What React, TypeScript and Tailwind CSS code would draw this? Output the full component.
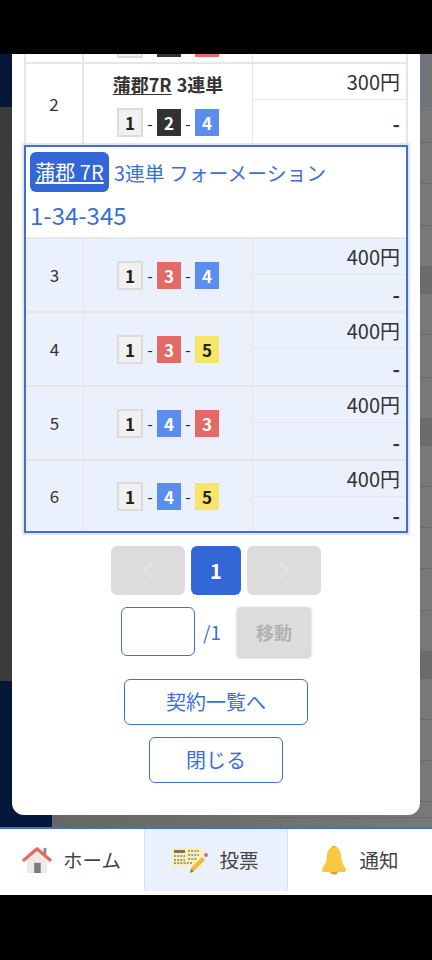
const font = { fontFamily: '"Noto Sans CJK JP", sans-serif' };

type Num = 1 | 2 | 3 | 4 | 5;

const numClass: Record<Num, string> = {
  1: "h-[29px] w-[26px] border-2 border-[#dcdcdc] bg-[#f1f1f1] text-[#222]",
  2: "h-[27px] w-[24px] bg-[#333333] text-white",
  3: "h-[27px] w-[24px] bg-[#e46a65] text-white",
  4: "h-[27px] w-[24px] bg-[#5b8def] text-white",
  5: "h-[27px] w-[24px] bg-[#f7e568] text-[#222]",
};

function Badge({ n }: { n: Num }) {
  return (
    <span className={`flex items-center justify-center text-[17px] leading-none font-bold ${numClass[n]}`}>
      {n}
    </span>
  );
}

function Combo({ nums }: { nums: Num[] }) {
  return (
    <div className="flex items-center justify-center">
      <Badge n={nums[0]} />
      <span className="w-[14px] text-center text-[16px] leading-none text-[#222]">-</span>
      <Badge n={nums[1]} />
      <span className="w-[14px] text-center text-[16px] leading-none text-[#222]">-</span>
      <Badge n={nums[2]} />
    </div>
  );
}

function Prices({ amount }: { amount: string }) {
  return (
    <div className="flex flex-1 flex-col">
      <div className="flex h-[36px] items-center justify-end border-b border-[#e6e6e6] pr-[6px] text-[20px] text-[#333]">
        {amount}
      </div>
      <div className="flex flex-1 items-center justify-end pr-[6px] pt-1 text-[20px] font-bold text-[#333]">-</div>
    </div>
  );
}

function GroupRow({ no, nums, last }: { no: number; nums: Num[]; last?: boolean }) {
  return (
    <div className={`flex bg-[#eaf0fc] ${last ? "h-[70px]" : "h-[74px] border-b-2 border-[#e6e6e6]"}`}>
      <div className="flex w-[58px] items-center justify-center border-r border-[#e6e6e6] text-[17px] text-[#333]">
        {no}
      </div>
      <div className="flex w-[169px] items-center justify-center border-r border-[#e6e6e6]">
        <Combo nums={nums} />
      </div>
      <Prices amount="400円" />
    </div>
  );
}

function HomeIcon() {
  return (
    <svg width="30" height="28" viewBox="0 0 32 30">
      <rect x="23" y="2" width="3" height="8" fill="#8a8a8a" />
      <path d="M5 13 L16 4 L27 13 V29 H5 Z" fill="#efebe4" />
      <rect x="13" y="18" width="7" height="11" fill="#7b7b7b" />
      <path d="M2 15 L16 3 L30 15" fill="none" stroke="#e46a60" strokeWidth="3.4" strokeLinecap="round" strokeLinejoin="round" />
    </svg>
  );
}

function TicketIcon() {
  return (
    <svg width="38" height="28" viewBox="0 0 38 28">
      <rect x="1" y="2" width="31" height="18" rx="1" fill="#f9efbb" />
      <rect x="3" y="4" width="11" height="3" fill="#77736a" />
      <path d="M3 10h11M3 14h11M17 5h11M17 9h11M17 13h9M3 17h18" stroke="#a49c7d" strokeWidth="2" strokeDasharray="2 1.2" />
      <path d="M20 22 L31 11 L34 14 L23 25 L19 27 Z" fill="#f2b93b" />
      <path d="M19 27 L20 23 L23 25 Z" fill="#8d7a4c" />
      <circle cx="35" cy="9" r="2" fill="#e46a60" />
    </svg>
  );
}

function BellIcon() {
  return (
    <svg width="26" height="30" viewBox="0 0 26 30">
      <circle cx="13" cy="4" r="3" fill="#ea9330" />
      <circle cx="13" cy="25" r="4.5" fill="#ea9330" />
      <path d="M13 2 C7 2 6 8 5.5 14 C5 19 2 21 1 25 C1 26.5 2 27 4 27 H22 C24 27 25 26.5 25 25 C24 21 21 19 20.5 14 C20 8 19 2 13 2 Z" fill="#fbc93f" />
    </svg>
  );
}

function Chevron({ dir }: { dir: "left" | "right" }) {
  return (
    <svg width="10" height="16" viewBox="0 0 10 16" fill="none" stroke="#e6e6e6" strokeWidth="1.4">
      <path d={dir === "left" ? "M9 0.5 L1.5 8 L9 15.5" : "M1 0.5 L8.5 8 L1 15.5"} />
    </svg>
  );
}

// strip of the page that shows behind the dim layer
function Backdrop() {
  const rows = [36, 41, 42, 41, 27, 41, 43, 41, 27, 41, 41, 41, 42, 41, 27, 41, 41, 41, 16];
  return (
    <div className="flex h-full">
      <div className="flex w-[52px] flex-col">
        <div className="h-[53px] bg-[#06183a]" />
        <div className="flex-1 bg-[#3b3b3b]" />
        <div className="h-[146px] bg-[#06183a]" />
      </div>
      <div className="flex flex-1 flex-col bg-gradient-to-r from-[#666666] to-[#787878]">
        <div className="h-[53px] bg-[#70737a]" />
        {rows.map((h, i) => (
          <div
            key={i}
            style={{ height: h }}
            className={`border-b border-[#6a6a6a] ${h === 27 ? "bg-[#6b6b6b]" : ""}`}
          />
        ))}
      </div>
    </div>
  );
}

export default function App() {
  return (
    <div style={font} className="flex h-[960px] w-[432px] flex-col overflow-hidden bg-black">
      <div className="h-[54px] shrink-0" />

      <div className="relative h-[773px] shrink-0">
        <Backdrop />

        <div className="absolute inset-x-[12px] top-0 h-[761px] overflow-hidden rounded-b-[12px] bg-white px-[12px]">
          <div className="flex h-[10px] border-x-2 border-b-2 border-[#e6e6e6]">
            <div className="w-[58px] border-r-2 border-[#e6e6e6]" />
            <div className="flex h-[10px] w-[169px] items-end justify-center overflow-hidden border-r border-[#e6e6e6]">
              <div className="mb-[6px] shrink-0">
                <Combo nums={[1, 2, 3]} />
              </div>
            </div>
            <div className="flex-1" />
          </div>

          <div className="flex h-[81px] border-x-2 border-[#e6e6e6]">
            <div className="flex w-[58px] items-center justify-center border-r-2 border-[#e6e6e6] pb-[2px] text-[17px] text-[#333]">
              2
            </div>
            <div className="flex w-[169px] flex-col items-center border-r border-[#e6e6e6] pt-[5px]">
              <div className="flex h-[30px] items-center gap-[5px] text-[18px] leading-none font-bold text-[#333]">
                <span className="underline underline-offset-2">蒲郡7R</span>
                <span>3連単</span>
              </div>
              <div className="mt-[9px]">
                <Combo nums={[1, 2, 4]} />
              </div>
            </div>
            <div className="flex flex-1 flex-col pb-[2px]">
              <Prices amount="300円" />
            </div>
          </div>

          <div className="border-2 border-[#3d70d9] outline-2 outline-[#e6e6e6]">
            <div className="flex h-[92px] flex-col border-b-2 border-[#e6e6e6] bg-white pl-[4px] pt-[5px] text-[20px] leading-none text-[#3a6fd8]">
              <div className="flex items-center">
                <span className="flex h-[40px] w-[79px] items-center justify-center rounded-[6px] bg-[#3367d6] text-white underline underline-offset-2">
                  蒲郡 7R
                </span>
                <span className="ml-[5px] pt-[1px] text-[19.8px] whitespace-nowrap">3連単 フォーメーション</span>
              </div>
              <div className="mt-[9px] text-[24px] leading-[28px]">1-34-345</div>
            </div>
            <GroupRow no={3} nums={[1, 3, 4]} />
            <GroupRow no={4} nums={[1, 3, 5]} />
            <GroupRow no={5} nums={[1, 4, 3]} />
            <GroupRow no={6} nums={[1, 4, 5]} last />
          </div>

          <div className="mt-[13px] flex justify-center gap-[6px]">
            <div className="flex h-[49px] w-[74px] items-center justify-center rounded-[6px] bg-[#dcdcdc]">
              <Chevron dir="left" />
            </div>
            <div className="flex h-[49px] w-[50px] items-center justify-center rounded-[6px] bg-[#3367d6] text-[20px] font-bold text-white">
              1
            </div>
            <div className="flex h-[49px] w-[74px] items-center justify-center rounded-[6px] bg-[#dcdcdc]">
              <Chevron dir="right" />
            </div>
          </div>

          <div className="mt-[12px] flex items-start justify-center">
            <div className="h-[49px] w-[74px] rounded-[6px] border border-[#3d70d9]" />
            <span className="ml-[8px] mt-[11px] w-[34px] text-[19px] text-[#3a6fd8]">/1</span>
            <div className="flex h-[50px] w-[74px] items-center justify-center rounded-[4px] bg-[#dcdcdc] text-[18px] font-bold text-[#b2b2b2] shadow-[0_1px_3px_rgba(0,0,0,0.25)]">
              移動
            </div>
          </div>

          <div className="mt-[22px] flex flex-col items-center gap-[12px] text-[20px] text-[#3a6fd8]">
            <div className="flex h-[46px] w-[184px] items-center justify-center rounded-[6px] border border-[#3d70d9]">
              契約一覧へ
            </div>
            <div className="flex h-[46px] w-[134px] items-center justify-center rounded-[6px] border border-[#3d70d9]">
              閉じる
            </div>
          </div>
        </div>
      </div>

      <nav className="flex h-[68px] shrink-0 border-t-2 border-[#3d70d9] bg-white pb-1 text-[19.5px] text-[#444]">
        <div className="flex w-[144px] items-center justify-center gap-[11px] pr-[1px]">
          <HomeIcon />
          <span>ホーム</span>
        </div>
        <div className="flex w-[144px] items-center justify-center gap-[10px] border-x border-[#dde3ee] bg-[#eaf0fc] pr-[2px]">
          <TicketIcon />
          <span>投票</span>
        </div>
        <div className="flex w-[144px] items-center justify-center gap-[12px]">
          <BellIcon />
          <span>通知</span>
        </div>
      </nav>

      <div className="flex-1" />
    </div>
  );
}
